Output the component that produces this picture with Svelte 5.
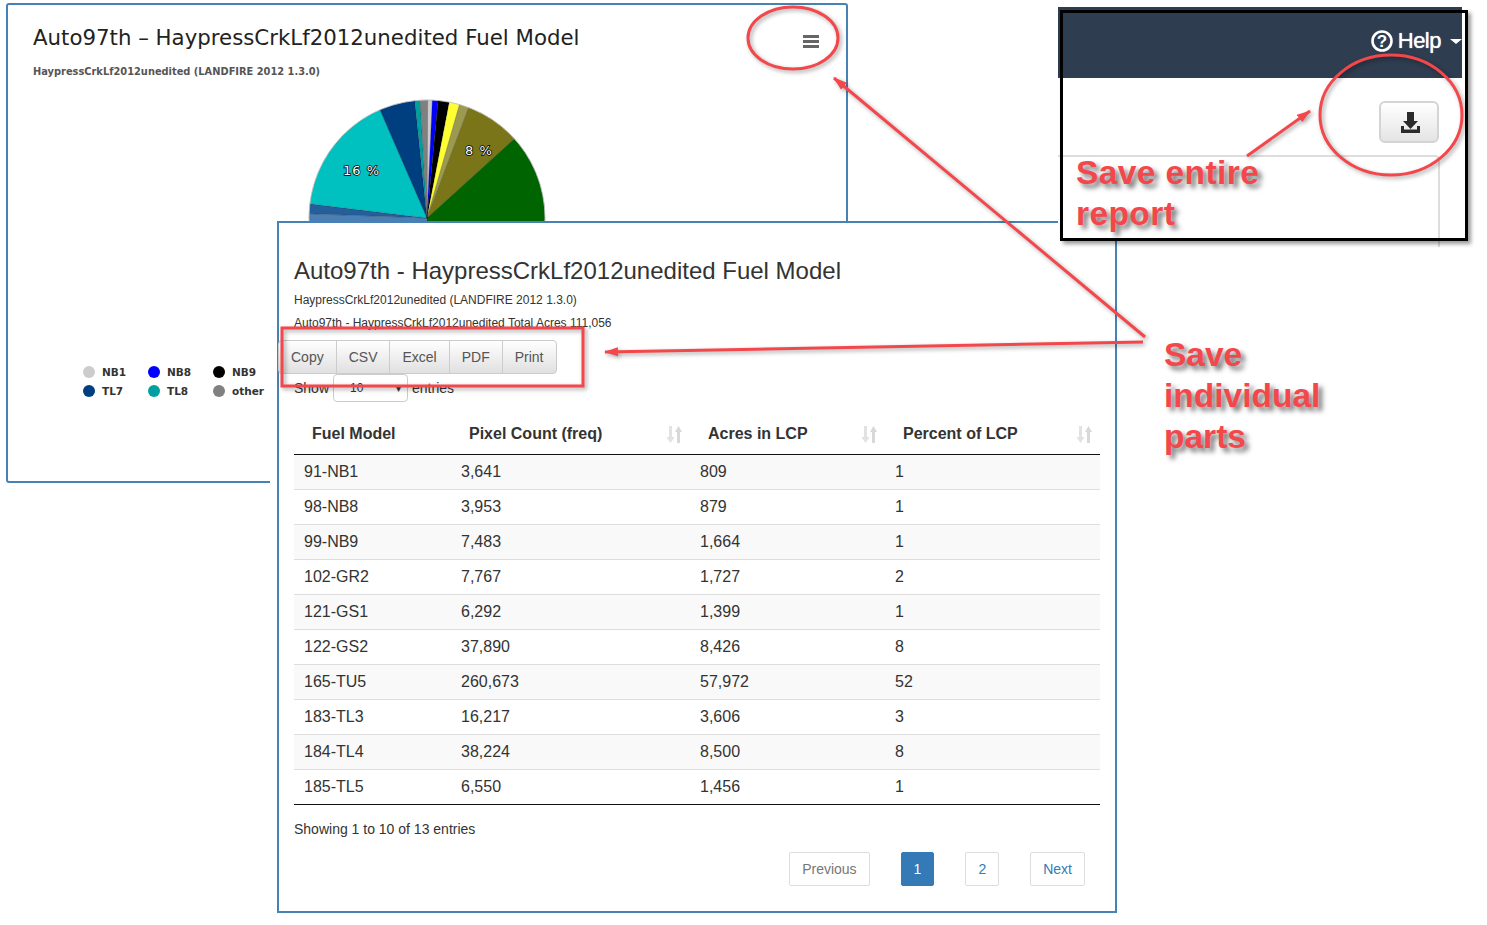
<script>
  // pie slices, angles in degrees clockwise from 12 o'clock
  const slices = [
    { from: 0.3, to: 2.6, color: '#cccccc' },
    { from: 2.6, to: 5.4, color: '#0000ff' },
    { from: 5.4, to: 10.9, color: '#000000' },
    { from: 10.9, to: 16, color: '#ffff33' },
    { from: 16, to: 20.7, color: '#9b9a50' },
    { from: 20.7, to: 47.8, color: '#7a7518' },
    { from: 47.8, to: 190, color: '#006400' },
    { from: 190, to: 272.1, color: '#4a7fb5' },
    { from: 272.1, to: 276.9, color: '#245f9c' },
    { from: 276.9, to: 336.5, color: '#00c0c0' },
    { from: 336.5, to: 354.1, color: '#003f7f' },
    { from: 354.1, to: 356.7, color: '#00a0a0' },
    { from: 356.7, to: 360.3, color: '#808080' }
  ];

  function point(angle) {
    const rad = (angle * Math.PI) / 180;
    return `${(120 + 118 * Math.sin(rad)).toFixed(2)} ${(120 - 118 * Math.cos(rad)).toFixed(2)}`;
  }

  function slicePath(s) {
    const large = s.to - s.from > 180 ? 1 : 0;
    return `M120 120 L${point(s.from)} A118 118 0 ${large} 1 ${point(s.to)} Z`;
  }

  const legend = [
    { label: 'NB1', color: '#cccccc' },
    { label: 'NB8', color: '#0000ff' },
    { label: 'NB9', color: '#000000' },
    { label: 'TL7', color: '#003f7f' },
    { label: 'TL8', color: '#00a0a0' },
    { label: 'other', color: '#808080' }
  ];

  const exportButtons = ['Copy', 'CSV', 'Excel', 'PDF', 'Print'];

  const columns = ['Fuel Model', 'Pixel Count (freq)', 'Acres in LCP', 'Percent of LCP'];

  const rows = [
    ['91-NB1', '3,641', '809', '1'],
    ['98-NB8', '3,953', '879', '1'],
    ['99-NB9', '7,483', '1,664', '1'],
    ['102-GR2', '7,767', '1,727', '2'],
    ['121-GS1', '6,292', '1,399', '1'],
    ['122-GS2', '37,890', '8,426', '8'],
    ['165-TU5', '260,673', '57,972', '52'],
    ['183-TL3', '16,217', '3,606', '3'],
    ['184-TL4', '38,224', '8,500', '8'],
    ['185-TL5', '6,550', '1,456', '1']
  ];
</script>

<div class="canvas">
  <!-- chart window behind the table -->
  <section class="chart-window">
    <header class="chart-head">
      <div>
        <h2>Auto97th – HaypressCrkLf2012unedited Fuel Model</h2>
        <p>HaypressCrkLf2012unedited (LANDFIRE 2012 1.3.0)</p>
      </div>
      <div class="burger"><span></span><span></span><span></span></div>
    </header>
    <svg class="pie" viewBox="0 0 240 240" width="240" height="240">
      {#each slices as s}
        <path d={slicePath(s)} fill={s.color} stroke="#000" stroke-opacity="0.25" stroke-width="0.6" />
      {/each}
      <circle cx="120" cy="120" r="118" fill="none" stroke="#ccc" stroke-width="0.8" />
      <text x="36" y="77">16 %</text>
      <text x="158" y="57">8 %</text>
    </svg>
    <div class="legend">
      {#each legend as item}
        <div class="legend-item"><i style="background:{item.color}"></i>{item.label}</div>
      {/each}
    </div>
  </section>

  <!-- data table window -->
  <section class="table-window">
    <h3>Auto97th - HaypressCrkLf2012unedited Fuel Model</h3>
    <p class="sub">HaypressCrkLf2012unedited (LANDFIRE 2012 1.3.0)</p>
    <p class="sub total">Auto97th - HaypressCrkLf2012unedited Total Acres 111,056</p>
    <div class="btn-group">
      {#each exportButtons as label}
        <button>{label}</button>
      {/each}
    </div>
    <div class="length">
      Show
      <span class="select">10<b>▾</b></span>
      entries
    </div>
    <table>
      <colgroup>
        <col style="width:157px" /><col style="width:239px" /><col style="width:195px" /><col style="width:215px" />
      </colgroup>
      <thead>
        <tr>
          {#each columns as col, i}
            <th>
              {col}
              {#if i > 0}
                <svg class="sort" viewBox="0 0 16 17" width="16" height="17">
                  <path d="M3 0h3v11h2.600L4.500 17 .4 11H3z" fill="#e2e2e2" />
                  <path d="M11 17h3V6h2L12.500 0 9 6h2z" fill="#d8d8d8" />
                </svg>
              {/if}
            </th>
          {/each}
        </tr>
      </thead>
      <tbody>
        {#each rows as row}
          <tr>
            {#each row as cell}
              <td>{cell}</td>
            {/each}
          </tr>
        {/each}
      </tbody>
    </table>
    <div class="info">Showing 1 to 10 of 13 entries</div>
    <nav class="pager">
      <span class="page muted">Previous</span>
      <span class="page active">1</span>
      <span class="page">2</span>
      <span class="page">Next</span>
    </nav>
  </section>

  <!-- cropped app screenshot, top right -->
  <section class="inset">
    <div class="navbar">
      <svg viewBox="0 0 24 24" width="24" height="24">
        <circle cx="12" cy="12" r="9.500" fill="none" stroke="#fff" stroke-width="2.600" />
        <text x="12" y="17.800" text-anchor="middle">?</text>
      </svg>
      <span class="help">Help</span>
      <span class="caret"></span>
    </div>
    <div class="inset-body">
      <button class="download" aria-label="Download">
        <svg viewBox="0 0 19 21" width="19" height="21">
          <path d="M6 0h7v9h4l-7.500 8L2 9h4z" fill="#2b2b2b" />
          <path d="M0 14h3v3.500h13V14h3v7H0z" fill="#2b2b2b" />
        </svg>
      </button>
    </div>
    <div class="card-edge"></div>
    <div class="frame"></div>
  </section>

  <!-- red annotations -->
  <svg class="marks" viewBox="0 0 1487 925" width="1487" height="925">
    <defs>
      <marker id="head" markerUnits="userSpaceOnUse" markerWidth="14" markerHeight="10" refX="13" refY="5" orient="auto">
        <path d="M0 0.500 L14 5 L0 9.500z" fill="#f4474c" />
      </marker>
    </defs>
    <g fill="none" stroke="#f4474c" stroke-width="3">
      <ellipse cx="793" cy="38" rx="45" ry="31" />
      <ellipse cx="1391" cy="115" rx="71" ry="60" />
      <rect x="282" y="328" width="301" height="58" />
      <line x1="1145" y1="337" x2="834" y2="78" marker-end="url(#head)" />
      <line x1="1143" y1="342" x2="605" y2="352" marker-end="url(#head)" />
      <line x1="1247" y1="156" x2="1310" y2="111" marker-end="url(#head)" />
    </g>
  </svg>
  <div class="note note-report">Save entire<br />report</div>
  <div class="note note-parts">Save<br />individual<br />parts</div>
</div>

<style>
  :global(body) {
    background: #fff;
    overflow: hidden;
  }

  .canvas {
    position: relative;
    width: 1487px;
    height: 925px;
    overflow: hidden;
    font-family: "Liberation Sans", Arial, sans-serif;
    color: #333;
  }

  /* chart window */
  .chart-window {
    position: absolute;
    left: 6px;
    top: 3px;
    width: 842px;
    height: 480px;
    box-sizing: border-box;
    border: 2px solid #4682b4;
    border-radius: 3px;
    padding: 19px 27px 0 25px;
    font-family: "DejaVu Sans", sans-serif;
  }
  .chart-head {
    display: flex;
    justify-content: space-between;
    align-items: flex-start;
  }
  .chart-head h2 {
    margin: 0;
    font-size: 21.300px;
    font-weight: 400;
    line-height: 28px;
    color: #222;
    white-space: nowrap;
  }
  .chart-head p {
    margin: 13px 0 0;
    font-size: 9.850px;
    font-weight: 700;
    line-height: 14px;
    color: #555;
  }
  .burger {
    display: flex;
    flex-direction: column;
    gap: 2px;
    width: 16px;
    margin-top: 11px;
  }
  .burger span {
    height: 3px;
    background: #666;
  }
  .pie {
    display: block;
    margin: 19px 0 0 274px;
  }
  .pie text {
    font-size: 13px;
    fill: #fff;
    stroke: #000;
    stroke-width: 1.500px;
    paint-order: stroke;
    letter-spacing: 1px;
  }
  .legend {
    display: grid;
    grid-template-columns: repeat(3, 65px);
    grid-auto-rows: 19px;
    margin: 24px 0 0 50px;
  }
  .legend-item {
    display: flex;
    align-items: center;
    gap: 7px;
    font-size: 10.500px;
    font-weight: 700;
    color: #333;
  }
  .legend-item i {
    width: 12px;
    height: 12px;
    border-radius: 50%;
  }

  /* table window */
  .table-window {
    position: absolute;
    left: 277px;
    top: 221px;
    width: 840px;
    height: 692px;
    box-sizing: border-box;
    border: 2px solid #4682b4;
    background: #fff;
    box-shadow: -7px 0 0 #fff;
    padding: 0 15px;
  }
  h3 {
    margin: 34px 0 0;
    font-size: 24px;
    font-weight: 400;
    line-height: 28px;
    color: #333;
    white-space: nowrap;
  }
  .sub {
    margin: 7px 0 0;
    font-size: 12px;
    line-height: 16px;
    color: #333;
  }
  .total {
    margin-top: 7px;
  }
  .btn-group {
    display: flex;
    width: max-content;
    margin: 9px 0 0 -16px;
  }
  .btn-group button {
    height: 34px;
    padding: 0 12px;
    margin-left: -1px;
    border: 1px solid #ccc;
    background: linear-gradient(#fff, #e0e0e0);
    font: 14px "Liberation Sans", Arial, sans-serif;
    color: #555;
  }
  .btn-group button:first-child {
    margin-left: 0;
    border-radius: 4px 0 0 4px;
  }
  .btn-group button:last-child {
    border-radius: 0 4px 4px 0;
  }
  .length {
    display: flex;
    align-items: center;
    gap: 4px;
    height: 28px;
    margin-top: 0;
    font-size: 14px;
  }
  .select {
    display: flex;
    justify-content: space-between;
    align-items: center;
    box-sizing: border-box;
    width: 75px;
    height: 28px;
    padding: 0 6px 0 16px;
    border: 1px solid #ccc;
    border-radius: 4px;
    font-size: 12px;
  }
  .select b {
    font-size: 10px;
    font-weight: 400;
  }
  table {
    width: 806px;
    margin-top: 11px;
    border-collapse: collapse;
    table-layout: fixed;
  }
  th {
    position: relative;
    height: 41px;
    box-sizing: border-box;
    padding: 2px 0 0 18px;
    border-bottom: 1px solid #111;
    text-align: left;
    font-size: 16px;
    font-weight: 700;
    color: #333;
  }
  .sort {
    position: absolute;
    right: 8px;
    top: 13px;
  }
  td {
    height: 34px;
    padding: 0 10px;
    border-top: 1px solid #ddd;
    font-size: 16px;
    color: #333;
  }
  tbody tr:first-child td {
    border-top: 0;
  }
  tbody tr:nth-child(odd) {
    background: #f9f9f9;
  }
  tbody tr:last-child td {
    border-bottom: 1px solid #111;
  }
  .info {
    margin-top: 16px;
    font-size: 14px;
    line-height: 16px;
  }
  .pager {
    display: flex;
    justify-content: flex-end;
    gap: 31px;
    margin: 15px 15px 0 0;
  }
  .page {
    display: flex;
    align-items: center;
    box-sizing: border-box;
    height: 34px;
    padding: 0 12px;
    border: 1px solid #ddd;
    border-radius: 2px;
    font-size: 14px;
    color: #337ab7;
  }
  .page.muted {
    color: #777;
  }
  .page.active {
    border-color: #337ab7;
    background: #337ab7;
    color: #fff;
  }

  /* inset */
  .inset {
    position: absolute;
    left: 1058px;
    top: 7px;
    width: 410px;
    height: 234px;
    background: #fff;
  }
  .navbar {
    display: flex;
    align-items: center;
    justify-content: flex-end;
    box-sizing: border-box;
    width: 404px;
    height: 71px;
    padding: 0 0 4px;
    background: #2e3d4f;
    color: #fff;
  }
  .navbar svg text {
    font: 700 17px "Liberation Sans", Arial, sans-serif;
    fill: #fff;
  }
  .help {
    margin-left: 4px;
    font-size: 22px;
    letter-spacing: -0.5px;
    text-shadow: 0 0 1px #fff;
  }
  .caret {
    width: 0;
    height: 0;
    margin: 2px 0 0 9px;
    border-top: 5px solid #fff;
    border-left: 6px solid transparent;
    border-right: 6px solid transparent;
  }
  .inset-body {
    display: flex;
    justify-content: flex-end;
    width: 381px;
    padding-top: 23px;
  }
  .download {
    display: flex;
    align-items: center;
    justify-content: center;
    width: 60px;
    height: 42px;
    padding: 0 0 0 2px;
    border: 2px solid #d4d4d4;
    border-radius: 6px;
    background: linear-gradient(#fff, #e4e4e4);
  }
  .card-edge {
    position: absolute;
    left: 0;
    top: 148px;
    width: 380px;
    height: 90px;
    border-top: 2px solid #ddd;
    border-right: 2px solid #ddd;
    border-top-right-radius: 5px;
  }
  .frame {
    position: absolute;
    left: 2px;
    top: 3px;
    right: 0;
    bottom: 0;
    border: 3px solid #000;
    box-shadow: 3px 3px 4px rgba(0, 0, 0, 0.4);
  }

  /* annotations */
  .marks {
    position: absolute;
    left: 0;
    top: 0;
    filter: drop-shadow(2px 2px 2px rgba(0, 0, 0, 0.35));
  }
  .note {
    position: absolute;
    font-size: 33.500px;
    font-weight: 700;
    line-height: 41px;
    color: #f4474c;
    text-shadow: 4px 4px 5px rgba(0, 0, 0, 0.55);
  }
  .note-report {
    left: 1076px;
    top: 152px;
    letter-spacing: 0.4px;
  }
  .note-parts {
    left: 1164px;
    top: 334px;
  }
</style>
